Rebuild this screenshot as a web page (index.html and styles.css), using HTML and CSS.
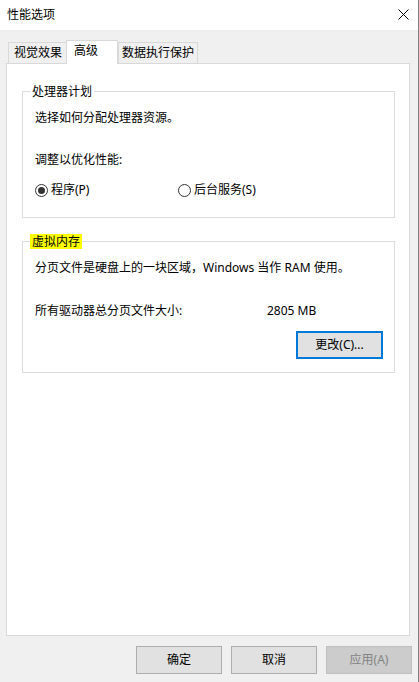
FILE: index.html
```html
<!DOCTYPE html>
<html lang="zh-CN">
<head>
<meta charset="utf-8">
<title>性能选项</title>
<link rel="stylesheet" href="styles.css">
</head>
<body>
<div class="window">
  <div class="titlebar">
    <span class="title">性能选项</span>
    <svg class="close" width="11" height="11" viewBox="0 0 11 11"><path d="M0.5 0.5L10.5 10.5M10.5 0.5L0.5 10.5" stroke="#000" stroke-width="1" fill="none"/></svg>
  </div>
  <div class="body">
    <div class="tabs">
      <div class="tab t1">视觉效果</div>
      <div class="tab active">高级</div>
      <div class="tab t3">数据执行保护</div>
    </div>
    <div class="panel">
      <fieldset class="group g1">
        <legend class="legend">处理器计划</legend>
        <div class="content">
          <div class="line l1">选择如何分配处理器资源。</div>
          <div class="line l2">调整以优化性能:</div>
          <div class="radios">
            <div class="radio r1"><span class="circle"><span class="dot"></span></span>程序(P)</div>
            <div class="radio"><span class="circle"></span>后台服务(S)</div>
          </div>
        </div>
      </fieldset>
      <fieldset class="group g2">
        <legend class="legend hl">虚拟内存</legend>
        <div class="content">
          <div class="line l1">分页文件是硬盘上的一块区域，Windows 当作 RAM 使用。</div>
          <div class="line l3"><span class="label">所有驱动器总分页文件大小:</span><span class="value">2805 MB</span></div>
          <div class="btnrow"><div class="btn focused">更改(C)...</div></div>
        </div>
      </fieldset>
    </div>
    <div class="buttons">
      <div class="btn">确定</div>
      <div class="btn">取消</div>
      <div class="btn disabled">应用(A)</div>
    </div>
  </div>
</div>
</body>
</html>
```

FILE: styles.css
```css
* { box-sizing: border-box; }
html, body { margin: 0; padding: 0; }
body {
  font-family: "Noto Sans", "Noto Sans CJK SC", sans-serif;
  font-size: 12px;
  color: #000;
}
.window {
  width: 419px;
  height: 682px;
  background: #f0f0f0;
  border-right: 1px solid #808080;
  display: flex;
  flex-direction: column;
}
.titlebar {
  height: 30px;
  background: #fff;
  display: flex;
  align-items: center;
  padding-left: 7px;
  position: relative;
}
.title { line-height: 16px; }
.close {
  position: absolute;
  left: 398px;
  top: 9px;
}
.body {
  flex: 1;
  display: flex;
  flex-direction: column;
  padding-top: 9px;
}
.tabs {
  display: flex;
  align-items: flex-end;
  margin-left: 8px;
  height: 24px;
  position: relative;
  z-index: 1;
}
.tab {
  height: 21px;
  line-height: 16px;
  padding-top: 2px;
  background: #f0f0f0;
  border-top: 1px solid #d9d9d9;
  white-space: nowrap;
}
.t1 {
  width: 58px;
  border-left: 1px solid #d9d9d9;
  padding-left: 5px;
}
.active {
  width: 52px;
  height: 24px;
  margin-bottom: -1px;
  background: #fff;
  border-left: 1px solid #d9d9d9;
  border-right: 1px solid #d9d9d9;
  padding-left: 7px;
  padding-top: 2px;
}
.t3 {
  width: 80px;
  border-left: 1px solid #d9d9d9;
  border-right: 1px solid #d9d9d9;
  padding-left: 3px;
}
.panel {
  margin-left: 6px;
  width: 404px;
  height: 573px;
  background: #fff;
  border: 1px solid #d9d9d9;
  display: flex;
  flex-direction: column;
}
.group {
  margin: 0 0 0 15px;
  width: 373px;
  border: 1px solid #dcdcdc;
  padding: 0;
  min-inline-size: 0;
}
.g1 { margin-top: 20px; }
.g2 { margin-top: 16px; }
.g1 .content { padding-bottom: 19px; }
.g2 .content { padding-bottom: 13px; }
.content { padding: 0 11px 0 12px; }
.legend {
  margin-left: 7px;
  padding: 0 2px;
  line-height: 15px;
}
.hl { background: #ffff00; }
.line { line-height: 16px; white-space: nowrap; }
.l1 { padding-top: 11px; }
.l2 { margin-top: 26px; }
.l3 { margin-top: 27px; display: flex; }
.label { width: 232px; }
.radios {
  margin-top: 14px;
  display: flex;
  line-height: 16px;
}
.radio {
  display: flex;
  align-items: center;
  white-space: nowrap;
}
.r1 { width: 143px; }
.circle {
  width: 13px;
  height: 13px;
  border: 1px solid #333;
  border-radius: 50%;
  margin-right: 3px;
  display: flex;
  align-items: center;
  justify-content: center;
}
.dot {
  width: 7px;
  height: 7px;
  border-radius: 50%;
  background: #333;
}
.btnrow {
  margin-top: 12px;
  display: flex;
  justify-content: flex-end;
}
.btn {
  width: 86px;
  height: 28px;
  background: #e1e1e1;
  border: 1px solid #adadad;
  display: flex;
  align-items: center;
  justify-content: center;
  line-height: 16px;
  white-space: nowrap;
}
.focused {
  width: 87px;
  border: 2px solid #0078d7;
}
.disabled {
  background: #cccccc;
  border-color: #bfbfbf;
  color: #838383;
}
.buttons {
  margin-top: 10px;
  display: flex;
  justify-content: flex-end;
  gap: 9px;
  padding-right: 6px;
}
```
